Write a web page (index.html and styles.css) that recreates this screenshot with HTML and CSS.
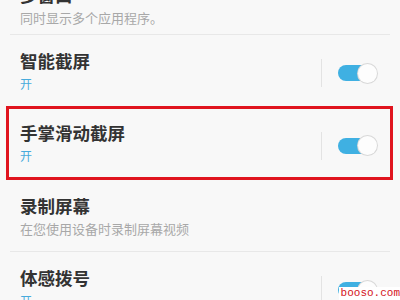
FILE: index.html
```html
<!DOCTYPE html>
<html lang="zh-CN">
<head>
<meta charset="utf-8">
<link rel="stylesheet" href="styles.css">
</head>
<body>
<div class="list">
  <div class="item item-top">
    <div class="text">
      <div class="title">多窗口</div>
      <div class="sub">同时显示多个应用程序。</div>
    </div>
  </div>
  <div class="sep"></div>
  <div class="item">
    <div class="text">
      <div class="title">智能截屏</div>
      <div class="sub on">开</div>
    </div>
    <div class="switch-area">
      <div class="vline"></div>
      <div class="switch"><div class="knob"></div></div>
    </div>
  </div>
  <div class="item highlight">
    <div class="text">
      <div class="title">手掌滑动截屏</div>
      <div class="sub on">开</div>
    </div>
    <div class="switch-area">
      <div class="vline"></div>
      <div class="switch"><div class="knob"></div></div>
    </div>
  </div>
  <div class="item">
    <div class="text">
      <div class="title">录制屏幕</div>
      <div class="sub">在您使用设备时录制屏幕视频</div>
    </div>
  </div>
  <div class="sep"></div>
  <div class="item">
    <div class="text">
      <div class="title">体感拨号</div>
      <div class="sub on">开</div>
    </div>
    <div class="switch-area">
      <div class="vline"></div>
      <div class="switch"><div class="knob"></div></div>
    </div>
  </div>
</div>
<div class="watermark">booso.com</div>
</body>
</html>
```

FILE: styles.css
```css
html, body {
  margin: 0;
  padding: 0;
  width: 400px;
  height: 300px;
  overflow: hidden;
  background: #f8f8f8;
  font-family: "Noto Sans CJK SC", "Noto Sans", sans-serif;
}
.list {
  display: flex;
  flex-direction: column;
}
.item {
  display: flex;
  align-items: center;
  justify-content: space-between;
  height: 71px;
  padding: 0 23px 0 20px;
  box-sizing: border-box;
  flex-shrink: 0;
}
.item-top {
  height: 48px;
  margin-top: -14px;
  align-items: flex-end;
  padding-bottom: 8px;
}
.text {
  display: flex;
  flex-direction: column;
  gap: 4px;
}
.title {
  font-size: 17.5px;
  line-height: 22px;
  font-weight: 600;
  color: #333;
}
.sub {
  font-size: 13px;
  line-height: 16px;
  color: #a8a8a8;
}
.sub.on {
  font-size: 12px;
  color: #48abdc;
}
.sep {
  height: 1px;
  margin: 0 10px;
  background: #e8e8e8;
  flex-shrink: 0;
}
.highlight {
  height: 74px;
  margin: 0 7px 0 6px;
  border: 3px solid #e0141e;
  padding: 0 13px 0 11px;
}
.switch-area {
  display: flex;
  align-items: center;
  gap: 16px;
  margin-top: 5px;
}
.vline {
  width: 1px;
  height: 28px;
  background: #e3e3e3;
}
.switch {
  position: relative;
  width: 39px;
  height: 19px;
  display: flex;
  align-items: center;
}
.switch::before {
  content: "";
  width: 34px;
  height: 16px;
  border-radius: 8px;
  background: #3fb0e2;
}
.knob {
  position: absolute;
  right: 0;
  top: 0;
  width: 19px;
  height: 19px;
  border-radius: 50%;
  background: #fdfdfd;
  box-shadow: 0 0 0 1px #d8d8d8;
}
.watermark {
  position: absolute;
  right: 0;
  bottom: 0;
  padding: 0 0 0 2px;
  background: #ffffff;
  color: #d4141c;
  font-family: "Liberation Mono", monospace;
  font-size: 11px;
  line-height: 13px;
}
```
